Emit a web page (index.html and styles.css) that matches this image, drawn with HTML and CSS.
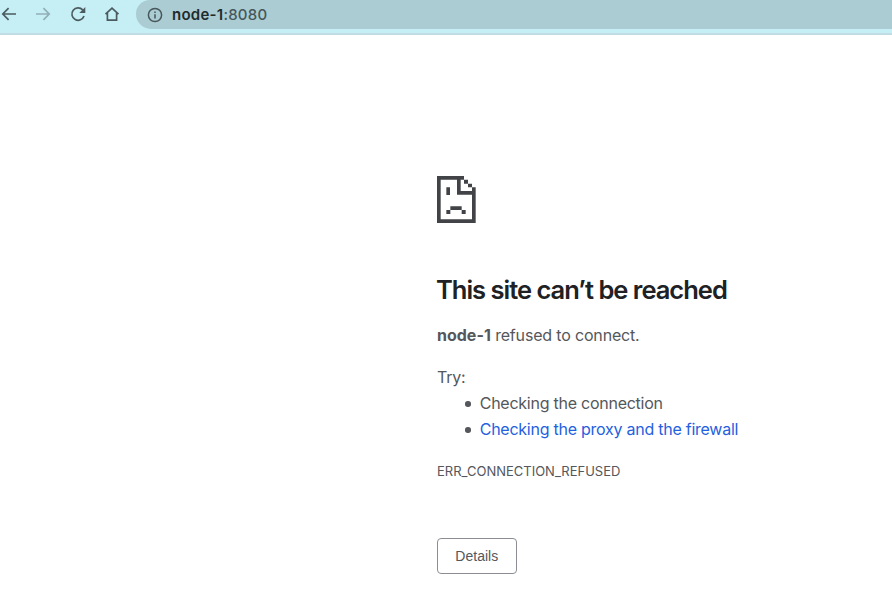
FILE: index.html
```html
<!DOCTYPE html>
<html lang="en">
<head>
<meta charset="utf-8">
<title>node-1:8080</title>
<link rel="stylesheet" href="styles.css">
</head>
<body>
<header class="toolbar">
  <nav class="nav">
    <svg class="icon" viewBox="0 0 18 18"><path d="M16 9H3M8.6 3.2 2.8 9l5.8 5.8"/></svg>
    <svg class="icon icon-off" viewBox="0 0 18 18"><path d="M2 9h13M9.4 3.2 15.2 9l-5.8 5.8"/></svg>
    <svg class="icon" viewBox="0 0 18 18"><path d="M15 11A6.2 6.2 0 1 1 13.7 4.9"/><path class="solid" d="M16.3 2v6h-6z"/></svg>
    <svg class="icon" viewBox="0 0 18 18"><path d="M2.5 9.2 9 3.2l6.5 6M4.4 8v7.1h9.2V8"/></svg>
  </nav>
  <div class="address">
    <svg class="info" viewBox="0 0 16 16"><circle cx="8" cy="8" r="6.6"/><path d="M8 7.2v4.2M8 4.4v1.5"/></svg>
    <span class="url"><b>node-1</b>:8080</span>
  </div>
</header>
<main class="error">
  <svg class="sad" viewBox="0 0 116 141"><path d="M0 0H81V11H11V130H105V56H60V11H71V45H105V34H116V141H0zM81 11H93V23H81zM93 23H105V34H93zM28 34H39V57H28zM40 91H74V102H40zM28 102H40V114H28zM74 102H86V114H74z"/></svg>
  <h1><span>This site can’t be reached</span></h1>
  <p class="summary"><strong>node-1</strong> <span>refused to connect.</span></p>
  <p class="try">Try:</p>
  <ul>
    <li><span>Checking the connection</span></li>
    <li><a>Checking the proxy and the firewall</a></li>
  </ul>
  <p class="code"><span>ERR_CONNECTION_REFUSED</span></p>
  <button type="button">Details</button>
</main>
</body>
</html>
```
FILE: styles.css
```css
body {
  margin: 0;
  background: #fff;
  color: #54575b;
  font: 16px/26px Inter, sans-serif;
  letter-spacing: -0.25px;
}
.toolbar {
  box-sizing: border-box;
  display: flex;
  height: 35px;
  background: #c5eff5;
  border-bottom: 2px solid #c2dce4;
}
.nav {
  display: flex;
  flex: none;
  gap: 16.3px;
  width: 136px;
  height: 28px;
  align-items: center;
}
.icon {
  flex: none;
  width: 18px;
  height: 18px;
  fill: none;
  stroke: #4b5b5f;
  stroke-width: 1.7;
}
.icon-off { stroke: #92afb5; }
.solid { fill: #4b5b5f; stroke: none; }
.address {
  display: flex;
  flex: 1;
  align-items: center;
  gap: 9px;
  height: 29px;
  padding-left: 11px;
  background: #abccd2;
  border-radius: 14px 0 0 15px;
}
.info {
  width: 16px;
  height: 16px;
  fill: none;
  stroke: #46565a;
  stroke-width: 1.5;
}
.url {
  color: #45565a;
  font-size: 15px;
  font-weight: 500;
  letter-spacing: 0.25px;
}
.url b { color: #1e2a2d; font-weight: 600; }
.error {
  padding: 141px 0 0 437px;
}
.sad {
  display: block;
  width: 38.7px;
  height: 47px;
  fill: #424346;
}
h1 {
  margin: 50px 0 0 -1px;
  color: #202124;
  font-size: 25.5px;
  font-weight: 600;
  line-height: 33px;
  letter-spacing: -1px;
}
p { margin: 0; }
.summary { margin-top: 16px; letter-spacing: -0.17px; }
.summary strong { font-weight: 700; letter-spacing: 0; }
.try { margin-top: 16px; }
ul { margin: 0; padding-left: 28px; list-style: none; }
li { display: flex; align-items: center; }
li::before {
  content: "";
  width: 5.5px;
  height: 5.5px;
  margin: 2px 9.2px 0 0;
  background: #54575b;
  border-radius: 50%;
}
a { color: #245fe0; }
.code {
  margin-top: 16px;
  font-size: 13px;
  letter-spacing: 0;
}
button {
  display: block;
  width: 79.5px;
  height: 36px;
  margin-top: 54px;
  padding: 0;
  background: #fff;
  border: 1px solid #8b8f94;
  border-radius: 4px;
  color: #54575b;
  font: 14px "Liberation Sans", sans-serif;
}
```
